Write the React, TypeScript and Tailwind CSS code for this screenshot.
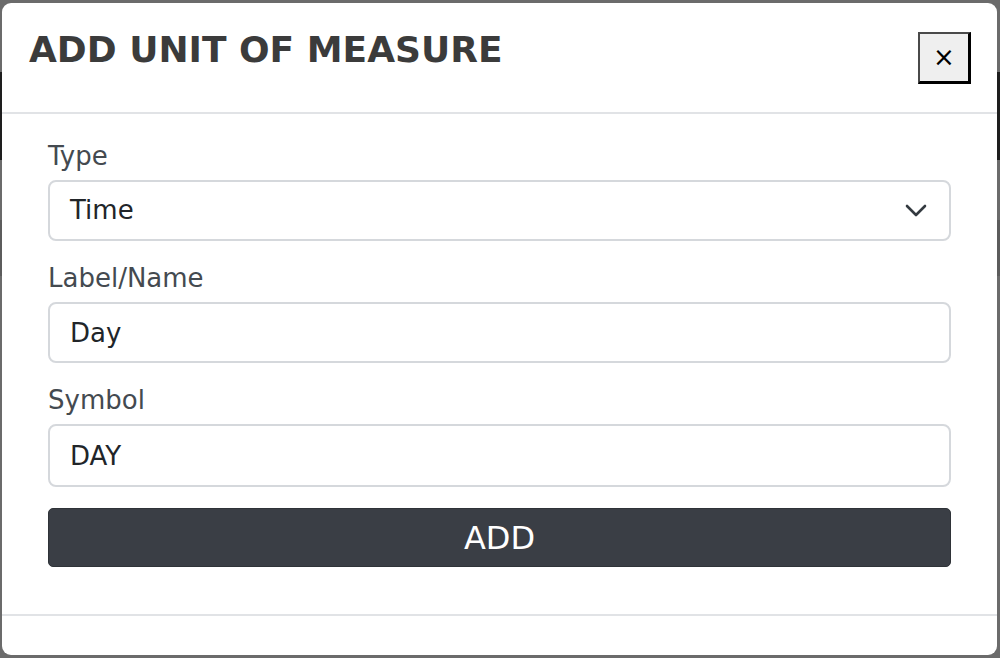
const font = { fontFamily: '"DejaVu Sans", Verdana, sans-serif' };

const Field = ({ label, children }: { label: string; children: React.ReactNode }) => (
    <div className="flex flex-col">
        <label className="text-[26px] leading-[30px] text-[#444a50] mb-[9px]">{label}</label>
        {children}
    </div>
);

const AddUnitModal = () => {
    return (
        <div className="w-[995px] h-[652px] rounded-[9px] bg-white flex flex-col overflow-hidden">
            {/* Header */}
            <div className="h-[111px] shrink-0 flex items-start justify-between border-b-2 border-[#e1e3e6] pl-[27px] pr-[26px]">
                <h1 className="mt-[26px] text-[36px] leading-[42px] font-bold text-[#3b3b3b]">
                    ADD UNIT OF MEASURE
                </h1>
                <button
                    type="button"
                    className="mt-[29px] w-[53px] h-[52px] bg-[#efefef] border-t-2 border-l-2 border-r-[3px] border-b-[3px] border-t-[#4a4a4a] border-l-[#4a4a4a] border-r-black border-b-black flex items-center justify-center text-[26px] text-black"
                >
                    ×
                </button>
            </div>

            {/* Body */}
            <div className="flex-1 px-[46px] pt-[27px] flex flex-col gap-[22px]">
                <Field label="Type">
                    <div className="h-[61px] rounded-[8px] border-2 border-[#d5d8dc] flex items-center justify-between pl-[20px] pr-[22px]">
                        <span className="text-[26px] text-[#212529]">Time</span>
                        <svg width="22" height="13" viewBox="0 0 22 13" fill="none" className="text-[#343a40]">
                            <path d="M2 2l9 9 9-9" stroke="currentColor" strokeWidth="2.6" strokeLinecap="round" strokeLinejoin="round" />
                        </svg>
                    </div>
                </Field>
                <Field label="Label/Name">
                    <input
                        readOnly
                        value="Day"
                        className="h-[61px] rounded-[8px] border-2 border-[#d5d8dc] px-[20px] text-[26px] text-[#212529] outline-none"
                        style={font}
                    />
                </Field>
                <Field label="Symbol">
                    <input
                        readOnly
                        value="DAY"
                        className="h-[63px] rounded-[8px] border-2 border-[#d5d8dc] px-[20px] text-[26px] text-[#212529] outline-none"
                        style={font}
                    />
                </Field>
                <button
                    type="button"
                    className="-mt-px h-[59px] rounded-[5px] bg-[#3a3e45] border border-[#2f3338] text-white text-[32px]"
                    style={font}
                >
                    ADD
                </button>
            </div>

            {/* Footer */}
            <div className="h-[41px] shrink-0 border-t-2 border-[#e1e3e6]" />
        </div>
    );
};

const App = () => {
    return (
        <div className="relative w-[1000px] h-[658px] overflow-hidden bg-[#6b6b6b]" style={font}>
            {/* dimmed page behind */}
            <div className="flex flex-col">
                <div className="h-[72px]" />
                <div className="h-[88px] bg-[#1e1e1e]" />
                <div className="h-[60px]" />
                <div className="h-[56px] bg-[#5c5c5c]" />
            </div>

            {/* overlay */}
            <div className="absolute inset-0 pt-[3px] pl-[2px]">
                <AddUnitModal />
            </div>
        </div>
    );
};

export default App;
